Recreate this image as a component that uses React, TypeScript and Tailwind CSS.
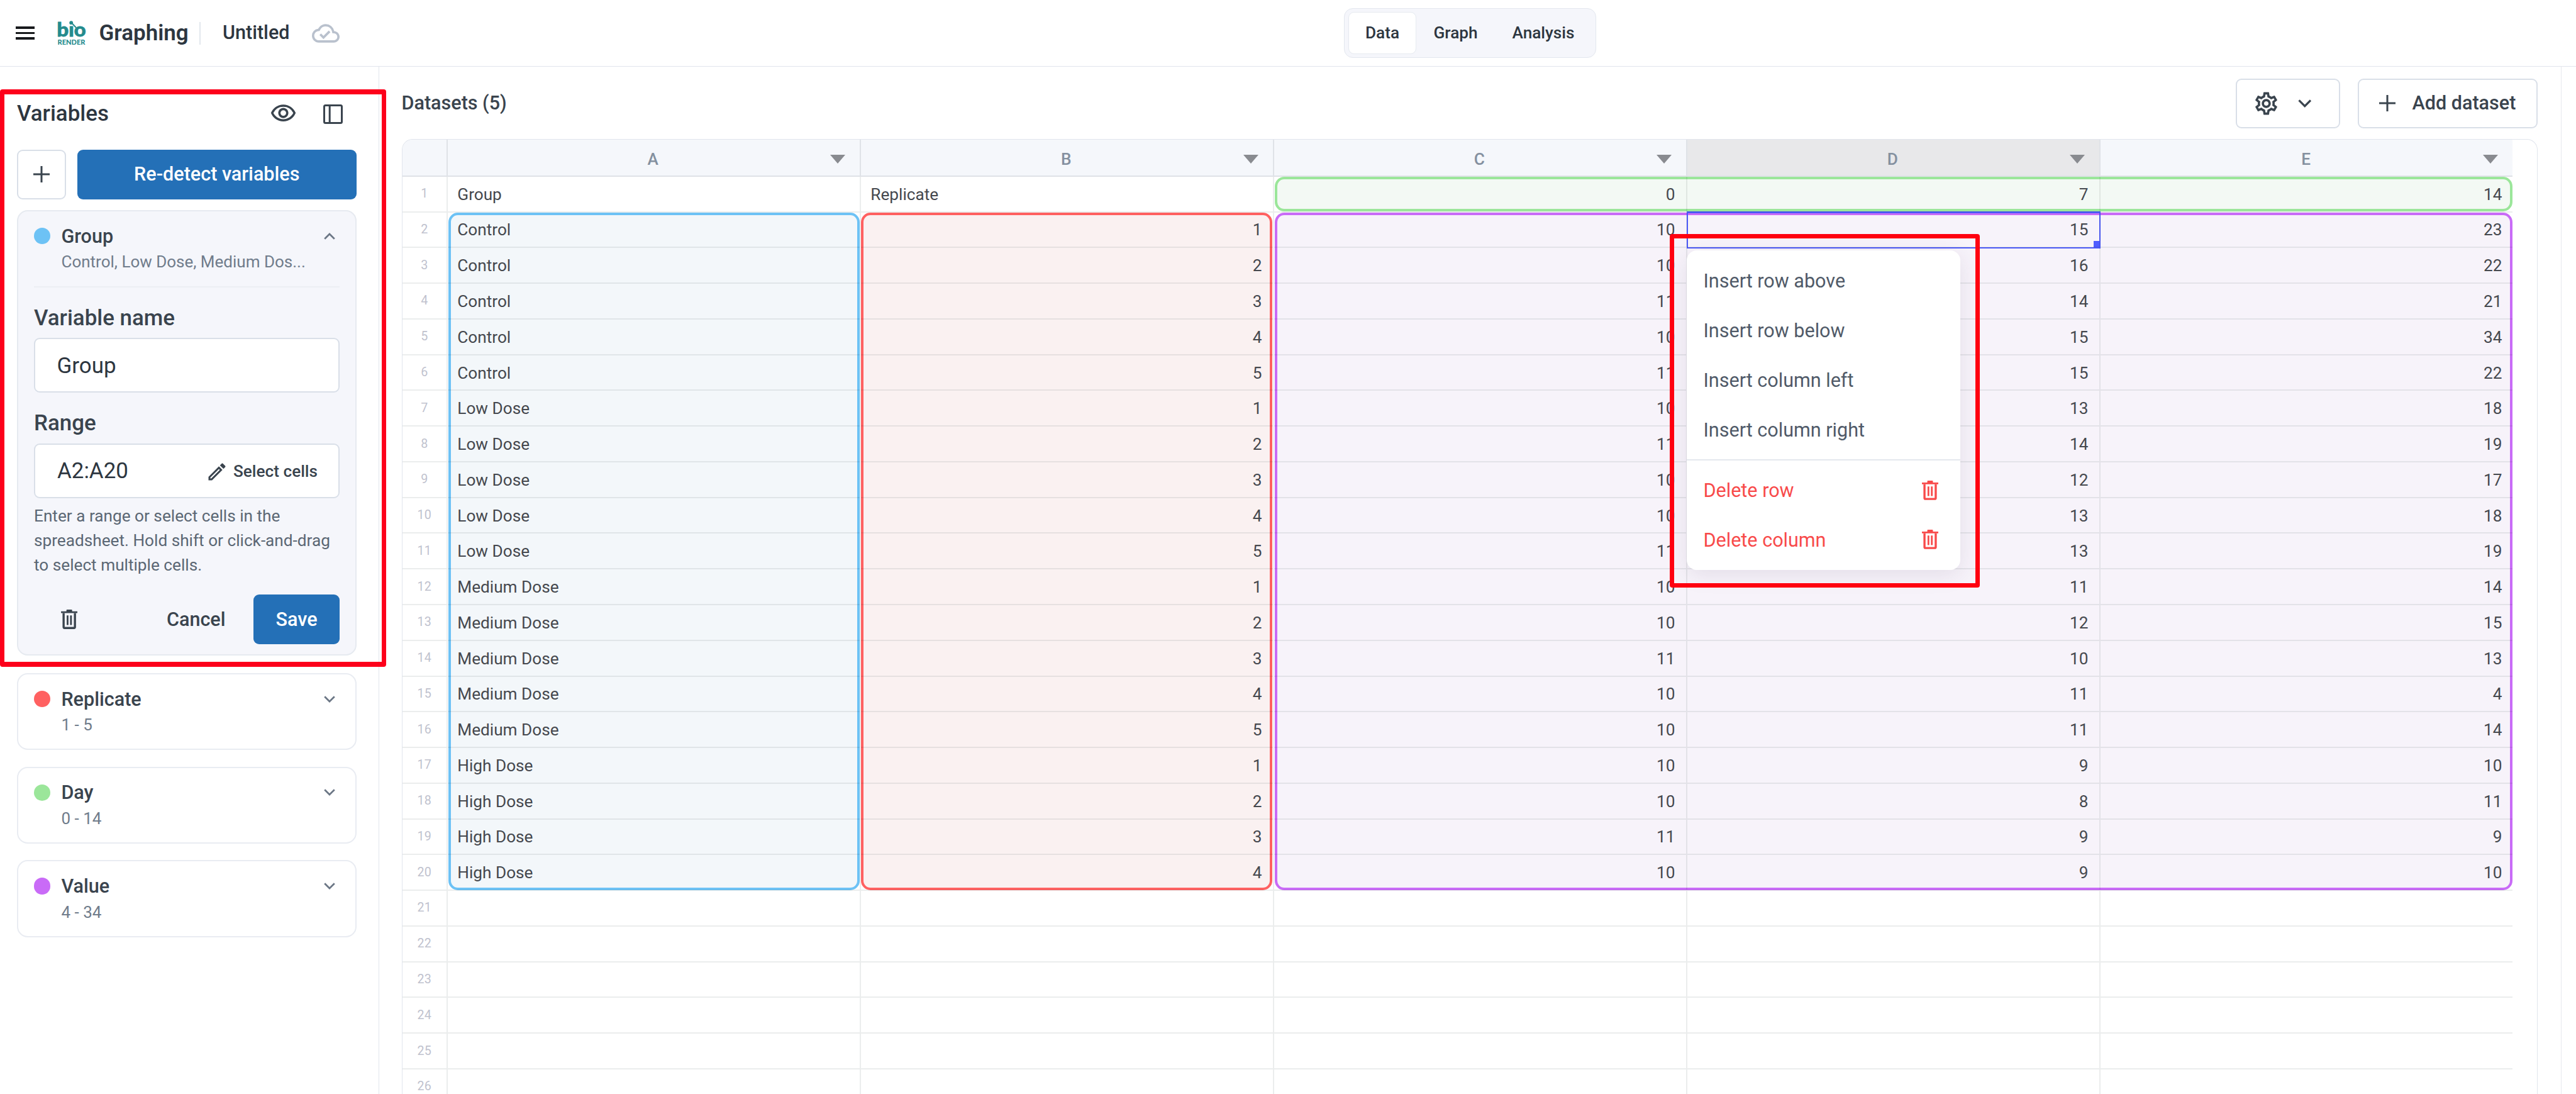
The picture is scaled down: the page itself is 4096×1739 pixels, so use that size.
import { clsx } from "clsx";
import { MdOutlineCloudDone, MdOutlineEdit, MdOutlineSettings, MdOutlineVisibility } from "react-icons/md";

const columns = ["A", "B", "C", "D", "E"];

const rows: string[][] = [
  ["Group", "Replicate", "0", "7", "14"],
  ["Control", "1", "10", "15", "23"],
  ["Control", "2", "10", "16", "22"],
  ["Control", "3", "11", "14", "21"],
  ["Control", "4", "10", "15", "34"],
  ["Control", "5", "11", "15", "22"],
  ["Low Dose", "1", "10", "13", "18"],
  ["Low Dose", "2", "11", "14", "19"],
  ["Low Dose", "3", "10", "12", "17"],
  ["Low Dose", "4", "10", "13", "18"],
  ["Low Dose", "5", "11", "13", "19"],
  ["Medium Dose", "1", "10", "11", "14"],
  ["Medium Dose", "2", "10", "12", "15"],
  ["Medium Dose", "3", "11", "10", "13"],
  ["Medium Dose", "4", "10", "11", "4"],
  ["Medium Dose", "5", "10", "11", "14"],
  ["High Dose", "1", "10", "9", "10"],
  ["High Dose", "2", "10", "8", "11"],
  ["High Dose", "3", "11", "9", "9"],
  ["High Dose", "4", "10", "9", "10"],
  ...Array.from({ length: 6 }, () => ["", "", "", "", ""]),
];

const collapsedVariables = [
  { name: "Replicate", summary: "1 - 5", dot: "bg-[#ff6161]" },
  { name: "Day", summary: "0 - 14", dot: "bg-[#9be69a]" },
  { name: "Value", summary: "4 - 34", dot: "bg-[#c96bf7]" },
];

const insertItems = ["Insert row above", "Insert row below", "Insert column left", "Insert column right"];
const deleteItems = ["Delete row", "Delete column"];

function Chevron({ up = false, className }: { up?: boolean; className?: string }) {
  return (
    <svg viewBox="0 0 18 11" fill="none" stroke="currentColor" strokeWidth="2.7" className={className}>
      <path d={up ? "M1.2 9.8 9 2l7.8 7.8" : "M1.2 1.2 9 9l7.8-7.8"} />
    </svg>
  );
}

function Plus({ className }: { className?: string }) {
  return (
    <svg viewBox="0 0 26 26" fill="none" stroke="currentColor" strokeWidth="3" className={className}>
      <path d="M13 0v26M0 13h26" />
    </svg>
  );
}

function Trash({ className }: { className?: string }) {
  return (
    <svg viewBox="0 0 131 155" fill="currentColor" className={className}>
      <path d="M43 14V5q0-5 5-5h35q5 0 5 5v9h43v14H0V14z" />
      <path d="M20.5 28v111q0 7 7 7h76q7 0 7-7V28" fill="none" stroke="currentColor" strokeWidth="17" />
      <path d="M45 46h14v77H45zM72 46h14v77H72z" />
    </svg>
  );
}

function Logo() {
  return (
    <svg viewBox="0 0 44 38" className="h-[38px] w-[44px] overflow-visible" fill="#248b8d">
      {/* dotless i, the dropper stands in for its dot */}
      <text x="-1.5" y="24.2" textLength="46" lengthAdjust="spacingAndGlyphs" className="font-[Lato] text-[30px] font-black" stroke="#248b8d" strokeWidth="0.8">
        bıo
      </text>
      <circle cx="21.2" cy="2.2" r="2.9" />
      <path d="M22.5 3l6.5 7" stroke="#248b8d" strokeWidth="1.9" />
      <text x="-0.5" y="36.7" textLength="44" lengthAdjust="spacingAndGlyphs" className="font-[Lato] text-[11px] font-black">
        RENDER
      </text>
    </svg>
  );
}

function Header() {
  return (
    <header className="flex h-[106px] shrink-0 items-center border-b border-[#e1e5ec] pl-[25px]">
      <div className="flex w-[2112px] items-center">
        <div className="flex w-[30px] flex-col gap-[5px]">
          <span className="h-[3.4px] bg-[#17191c]" />
          <span className="h-[3.4px] bg-[#17191c]" />
          <span className="h-[3.4px] bg-[#17191c]" />
        </div>
        <div className="ml-[36.5px]">
          <Logo />
        </div>
        <span className="ml-[22px] w-[159px] text-[34.93px] leading-[40px] font-semibold text-[#2d3640]">Graphing</span>
        <span className="h-[36px] w-[2px] bg-[#e2e7ed]" />
        <span className="-mt-[2px] ml-[35.5px] w-[142px] text-[30.56px] leading-[36px] font-medium text-[#2d3640]">Untitled</span>
        <MdOutlineCloudDone className="h-[44px] w-[44px] text-[#b9c1cd]" />
      </div>
      <nav className="flex h-[79px] w-[400.6px] items-center rounded-[14px] border border-[#e3e7ee] bg-[#f5f6fb] px-[6px] text-[26.2px] font-medium text-[#2d3640]">
        <span className="flex h-[67px] w-[108px] items-center justify-center rounded-[9px] border border-[#e6eaf0] bg-white">Data</span>
        <span className="ml-[27.5px] w-[125px]">Graph</span>
        <span>Analysis</span>
      </nav>
    </header>
  );
}

function VariableHeading({ name, summary, dot, open = false }: { name: string; summary: string; dot: string; open?: boolean }) {
  return (
    <>
      <div className="flex h-[36px] items-center text-[30.56px] leading-[36px] font-medium text-[#3a444e]">
        <span className={clsx("h-[26.4px] w-[26.4px] rounded-full", dot)} />
        <span className="ml-[17px] flex-1 pt-px">{name}</span>
        <Chevron up={open} className="mr-[7.5px] h-[11px] w-[18px] text-[#6b7685]" />
      </div>
      <p className="mt-[7px] pl-[43.5px] text-[26px] leading-[32px] text-[#707c8b]">{summary}</p>
    </>
  );
}

function Sidebar() {
  return (
    <aside className="w-[603px] shrink-0 border-r border-[#e1e5ed] pt-[54px] pr-[35px] pl-[27px]">
      <div className="flex h-[40px] items-center text-[#3a444e]">
        <h2 className="flex-1 pt-[2px] text-[34.93px] font-medium text-[#2d3640]">Variables</h2>
        <MdOutlineVisibility className="h-[43px] w-[43px]" />
        <svg viewBox="0 0 31 31" fill="none" stroke="currentColor" strokeWidth="3" className="mt-[2px] mr-[22px] ml-[42px] h-[31px] w-[31px]">
          <rect x="1.5" y="1.5" width="28" height="28" rx="2" />
          <path d="M10.2 2v27" />
        </svg>
      </div>

      <div className="mt-[37.5px] flex h-[79px] gap-[18px]">
        <button className="flex w-[77.5px] items-center justify-center rounded-[9px] border-2 border-[#d9dfe8] text-[#3a444e]">
          <Plus className="h-[26px] w-[26px]" />
        </button>
        <button className="flex-1 rounded-[9px] bg-[#2470b7] text-[30.56px] font-medium text-white">Re-detect variables</button>
      </div>

      <section className="mt-[17.5px] h-[708px] rounded-[17px] border-2 border-[#e6eaf0] bg-[#f5f6fb] px-[25px] pt-[21.3px]">
        <VariableHeading open name="Group" summary="Control, Low Dose, Medium Dos..." dot="bg-[#6dc2f5]" />
        <hr className="mt-[22.8px] border-t-2 border-[#eceef3]" />

        <label className="mt-[31px] block text-[34.93px] leading-[36px] font-medium text-[#3a444e]">Variable name</label>
        <div className="mt-[13.3px] flex h-[87px] items-center rounded-[9px] border-2 border-[#d9dfe8] bg-white pt-[2px] pl-[34.5px] text-[34.93px] text-[#2d3640]">
          Group
        </div>

        <label className="mt-[31px] block text-[34.93px] leading-[36px] font-medium text-[#3a444e]">Range</label>
        <div className="mt-[13.8px] flex h-[87px] items-center rounded-[9px] border-2 border-[#d9dfe8] bg-white pt-[2px] pr-[33px] pl-[35px] text-[34.93px] text-[#2d3640]">
          <span className="flex-1">A2:A20</span>
          <MdOutlineEdit className="mr-[8px] h-[36px] w-[36px] text-[#3a444e]" />
          <span className="text-[26.2px] font-medium text-[#3a444e]">Select cells</span>
        </div>

        <p className="mt-[9.2px] text-[26.2px] leading-[39px] whitespace-nowrap text-[#5b6774]">
          Enter a range or select cells in the
          <br />
          spreadsheet. Hold shift or click-and-drag
          <br />
          to select multiple cells.
        </p>

        <div className="mt-[26.9px] flex h-[79px] items-center text-[30.56px] font-medium text-[#3a444e]">
          <Trash className="ml-[43px] h-[31px] w-[26.3px]" />
          <span className="flex-1" />
          <span className="mr-[44.5px]">Cancel</span>
          <button className="h-full w-[137px] rounded-[9px] bg-[#2470b7] text-white">Save</button>
        </div>
      </section>

      <div className="mt-[28px] flex flex-col gap-[26.5px]">
        {collapsedVariables.map((variable) => (
          <section key={variable.name} className="h-[122.2px] rounded-[17px] border-2 border-[#e9ecf2] px-[25px] pt-[21.3px]">
            <VariableHeading {...variable} />
          </section>
        ))}
      </div>
    </aside>
  );
}

function Spreadsheet() {
  return (
    <div className="flex-1 overflow-hidden rounded-t-[17px] border border-b-0 border-[#e1e5ed]">
      <div className="relative w-[3355px] overflow-hidden">
        {/* variable ranges */}
        <div className="absolute top-[59px] left-[1387px] h-[55px] w-[1968px] rounded-[15px] border-4 border-[#9be69a] bg-[#f3f9f4]" />
        <div className="absolute top-[116px] left-[73px] h-[1077px] w-[654.5px] rounded-[15px] border-4 border-[#6dc2f5] bg-[#f3f7fa]" />
        <div className="absolute top-[116px] left-[729.5px] h-[1077px] w-[654px] rounded-[15px] border-4 border-[#ff6161] bg-[#faf1f1]" />
        <div className="absolute top-[116px] left-[1387px] h-[1077px] w-[1968px] rounded-[15px] border-4 border-[#c96bf7] bg-[#f7f3fa]" />

        {/* active cell */}
        <div className="absolute top-[113.5px] left-[2042px] h-[59.5px] w-[658.5px] border-2 border-t-3 border-[#4f5cff]">
          <span className="absolute -right-[2px] -bottom-[2px] h-[12px] w-[11px] bg-[#4f5cff]" />
        </div>

        <div className="flex h-[58.8px] border-b-2 border-[#dfe2e7] bg-[#f5f7fb]">
          <div className="w-[72.3px] shrink-0 border-r-2 border-[#dfe2e7]" />
          {columns.map((column) => (
            <div
              key={column}
              className={clsx(
                "flex w-[657px] shrink-0 items-center border-[#dfe2e7] pt-[5px] pr-[23px] pl-[45px] last:w-[655.5px]",
                column !== "E" && "border-r-2",
                column === "D" && "bg-[#e8e8ea]",
              )}
            >
              <span className="flex-1 text-center text-[26.2px] leading-[30px] font-medium text-[#84909f]">{column}</span>
              <svg viewBox="0 0 24 14" className="h-[14px] w-[24px] fill-[#898b90]">
                <path d="M0 0h24L12 14z" />
              </svg>
            </div>
          ))}
        </div>

        {rows.map((row, rowIndex) => (
          <div key={rowIndex} className="relative flex h-[56.77px] border-b-2 border-[#001414]/8 text-[26.2px] leading-[30px] text-[#45484e]">
            <div className="flex w-[72.3px] shrink-0 items-center justify-center border-r-2 border-[#001414]/8 text-[19.65px] text-[#c0c2ce]">
              {rowIndex + 1}
            </div>
            {row.map((value, columnIndex) => (
              <div
                key={columnIndex}
                className={clsx(
                  "flex w-[657px] shrink-0 items-center border-[#001414]/8 pt-px pr-[17.4px] pl-[15.5px] last:w-[656px]",
                  columnIndex < 4 && "border-r-2",
                  /^\d+$/.test(value) && "justify-end",
                )}
              >
                {value}
              </div>
            ))}
          </div>
        ))}
      </div>
    </div>
  );
}

function ContextMenu() {
  return (
    <div className="absolute top-[398px] left-[2682px] h-[507.5px] w-[434.5px] rounded-[16px] bg-white py-[10px] text-[30.56px] text-[#505a68] shadow-[0_8px_34px_rgba(60,40,80,0.1)]">
      {insertItems.map((item) => (
        <div key={item} className="flex h-[78.8px] items-center px-[26.5px]">
          {item}
        </div>
      ))}
      <hr className="mt-[6.5px] mb-[9px] border-t-2 border-[#e4e8ee]" />
      {deleteItems.map((item) => (
        <div key={item} className="flex h-[78.8px] items-center justify-between pr-[35px] pl-[26.5px] text-[#f84a4a]">
          {item}
          <Trash className="-mt-[2px] h-[31px] w-[26px]" />
        </div>
      ))}
    </div>
  );
}

export default function App() {
  return (
    <div className="relative flex h-[1739px] w-[4096px] flex-col overflow-hidden bg-white font-[Roboto,'Liberation_Sans',sans-serif]">
      <Header />

      <div className="flex min-h-0 flex-1">
        <Sidebar />
        <main className="flex w-[3469.5px] flex-col border-r border-[#e6e9ef] pt-[18.5px] pr-[36.5px] pl-[35.5px]">
          <div className="flex h-[79px] items-center gap-[28px] text-[30.56px] font-medium text-[#3a444e]">
            <h1 className="flex-1">Datasets (5)</h1>
            <button className="flex h-full w-[166px] items-center rounded-[9px] border-2 border-[#d9dfe8] pl-[24.5px]">
              <MdOutlineSettings className="h-[43px] w-[43px]" />
              <Chevron className="ml-[29px] h-[13px] w-[21.5px]" />
            </button>
            <button className="flex h-full w-[286px] items-center rounded-[9px] border-2 border-[#d9dfe8] pl-[31.5px]">
              <Plus className="mr-[27px] h-[26px] w-[26px]" />
              Add dataset
            </button>
          </div>
          <div className="mt-[17.5px] flex min-h-0 flex-1">
            <Spreadsheet />
          </div>
        </main>
      </div>

      <ContextMenu />

      {/* highlight frames */}
      <div className="absolute top-[141.5px] left-0 h-[918px] w-[614px] rounded-[4px] border-[7px] border-t-8 border-b-8 border-[#fd001b]" />
      <div className="absolute top-[372px] left-[2654.5px] h-[562px] w-[493.5px] rounded-[4px] border-[7px] border-[#ff0010]" />
    </div>
  );
}
